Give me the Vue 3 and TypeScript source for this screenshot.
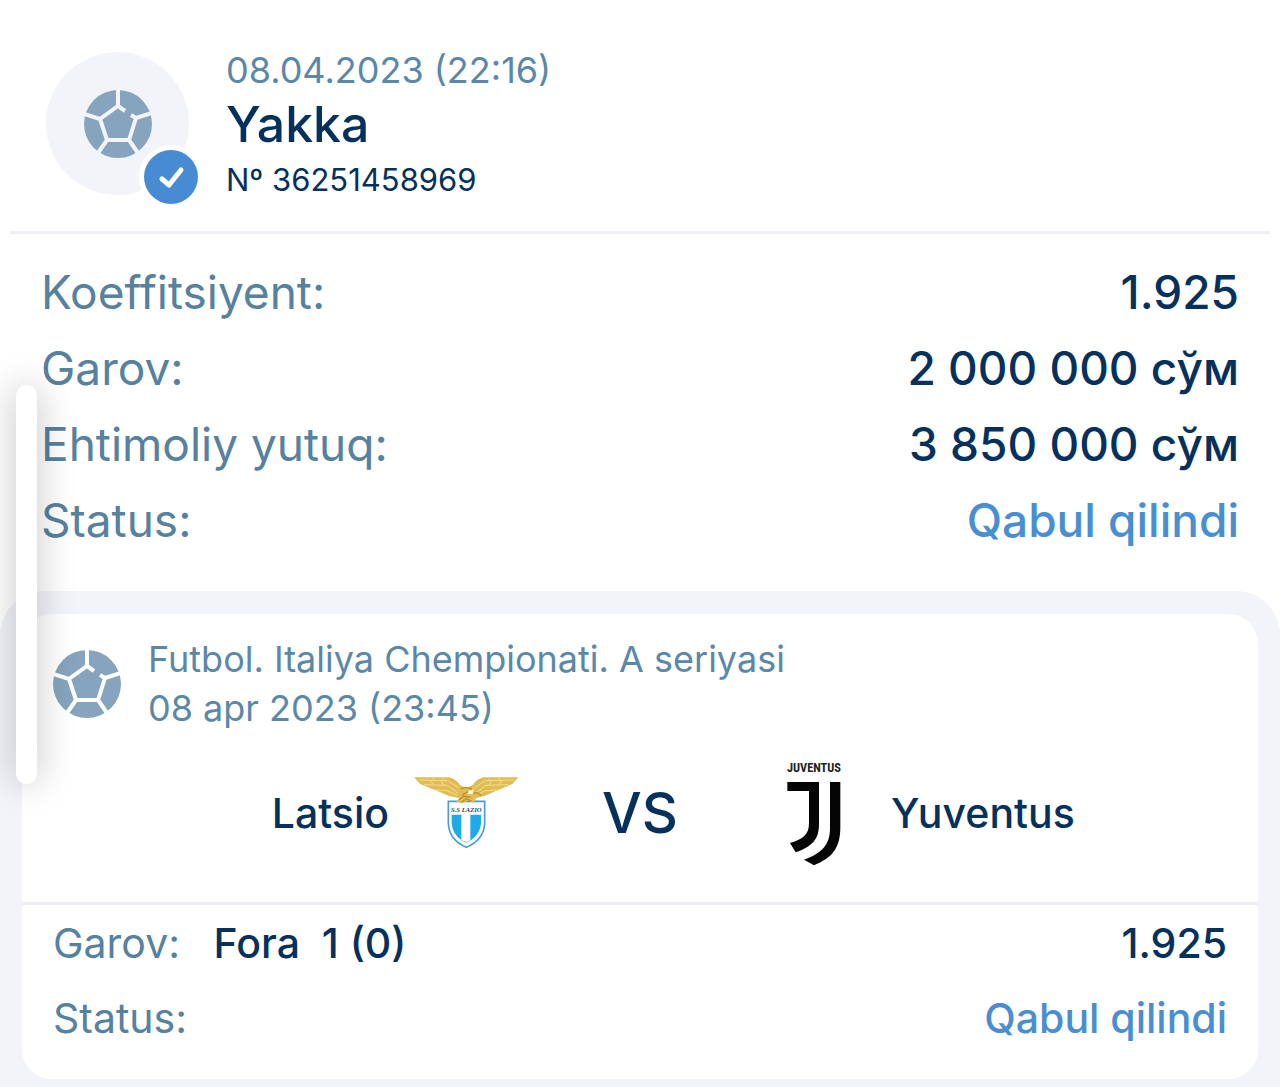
<script setup lang="ts">
interface Row {
  label: string
  value: string
  accent?: boolean
}

const coupon = {
  date: '08.04.2023 (22:16)',
  type: 'Yakka',
  number: 'Nº 36251458969',
}

const summary: Row[] = [
  { label: 'Koeffitsiyent:', value: '1.925' },
  { label: 'Garov:', value: '2 000 000 сўм' },
  { label: 'Ehtimoliy yutuq:', value: '3 850 000 сўм' },
  { label: 'Status:', value: 'Qabul qilindi', accent: true },
]

const match = {
  league: 'Futbol. Italiya Chempionati. A seriyasi',
  date: '08 apr 2023 (23:45)',
  home: 'Latsio',
  away: 'Yuventus',
}
</script>

<template>
  <main class="page">
    <header class="head">
      <div class="avatar">
        <svg class="ball" viewBox="0 0 68 68" aria-hidden="true">
          <circle cx="34" cy="34" r="34" fill="#86a4bd" />
          <path
            d="M34 0V17M41 21L34 16L16 29L23 50H45L52 28L47 25M52 28L68 23M16 29L0 24M23 50L14 63M45 50L54 63"
            fill="none" stroke="#f3f4fa" stroke-width="4"
          />
        </svg>
        <svg class="badge" viewBox="0 0 64 64" aria-hidden="true">
          <circle cx="32" cy="32" r="32" fill="#fff" />
          <circle cx="32" cy="32" r="27" fill="#478cd3" />
          <path d="M23 34L30 40L42 25" fill="none" stroke="#fff" stroke-width="5" stroke-linecap="round" stroke-linejoin="round" />
        </svg>
      </div>
      <div class="info">
        <time class="date">{{ coupon.date }}</time>
        <h1 class="type">{{ coupon.type }}</h1>
        <p class="number">{{ coupon.number }}</p>
      </div>
    </header>

    <dl class="summary">
      <div v-for="row in summary" :key="row.label" class="row">
        <dt>{{ row.label }}</dt>
        <dd :class="{ accent: row.accent }">{{ row.value }}</dd>
      </div>
    </dl>

    <section class="events">
      <article class="card">
        <div class="league">
          <svg class="ball" viewBox="0 0 68 68" aria-hidden="true">
            <circle cx="34" cy="34" r="34" fill="#86a4bd" />
            <path
              d="M34 0V17M41 21L34 16L16 29L23 50H45L52 28L47 25M52 28L68 23M16 29L0 24M23 50L14 63M45 50L54 63"
              fill="none" stroke="#fff" stroke-width="4"
            />
          </svg>
          <p>{{ match.league }}<br /><time>{{ match.date }}</time></p>
        </div>

        <div class="teams">
          <div class="team home">
            <span>{{ match.home }}</span>
            <svg class="logo" viewBox="45 3 312 312" aria-hidden="true">
              <path d="M148 124H257V190Q255 240 202 262Q150 240 148 190Z" fill="#fff" stroke="#4a9bd0" stroke-width="5" />
              <path d="M158 164H187V240Q160 222 158 190ZM214 164H246V190Q244 222 214 242Z" fill="#20a9ea" />
              <path d="M187 240Q202 252 214 242" fill="none" stroke="#8cc9e8" stroke-width="3" />
              <text x="202" y="157" text-anchor="middle" class="crest">S.S LAZIO</text>
              <path
                d="M45 52L150 52Q170 56 184 76L200 84L220 76Q234 56 254 52L358 52L340 72L312 84L284 96L256 108L232 114L222 128L208 122L190 130L172 126L180 114L150 108L122 96L92 84L64 72Z"
                fill="#e0bc52"
              />
              <path
                d="M60 60L146 62L180 84M76 74L144 76L176 98M108 90L144 92L174 106M344 60L258 62L226 84M328 74L260 76L232 98M296 90L260 92L236 104M100 52L108 62M130 52L138 62M304 52L296 62M274 52L266 62M96 62L104 74M308 62L300 74M126 62L134 76M278 62L270 76"
                fill="none" stroke="#f4dd94" stroke-width="3"
              />
              <path
                d="M186 86L200 82L216 86L220 98L206 96L190 104M216 100L234 98L246 106M180 120L194 108L214 112M188 126L202 116L218 124"
                fill="none" stroke="#b98f32" stroke-width="4"
              />
              <path d="M208 92L224 88L222 102L206 103Z" fill="#fff3c4" />
            </svg>
          </div>
          <strong class="versus">VS</strong>
          <div class="team away">
            <svg class="logo" viewBox="-24 33 312 312" aria-hidden="true">
              <text x="132" y="66" text-anchor="middle" class="wordmark">JUVENTUS</text>
              <path
                d="M52 96H147V222C147 270 125 290 77 307L60 279C100 266 117 254 117 218V123H52Z"
                fill="#050505"
              />
              <path d="M180 96H211V232C211 296 185 324 132 346L102 329C154 311 180 286 180 235Z" fill="#050505" />
            </svg>
            <span>{{ match.away }}</span>
          </div>
        </div>

        <dl class="bet">
          <div class="row">
            <dt>Garov: <b>Fora&nbsp; 1 (0)</b></dt>
            <dd>1.925</dd>
          </div>
          <div class="row">
            <dt>Status:</dt>
            <dd class="accent">Qabul qilindi</dd>
          </div>
        </dl>
      </article>
    </section>

    <div class="handle" aria-hidden="true"></div>
  </main>
</template>

<style>
body {
  margin: 0;
  background: #fff;
}
</style>

<style scoped>
.page {
  position: relative;
  display: flex;
  flex-direction: column;
  min-height: 100vh;
  overflow: hidden;
  font-family: Inter, 'Liberation Sans', sans-serif;
  color: #05315c;
}

h1,
p,
dl,
dd {
  margin: 0;
}

.head {
  display: flex;
  gap: 37px;
  margin: 0 10px;
  padding: 46px 36px 25px;
  border-bottom: 3px solid #eff0f3;
}

.avatar {
  position: relative;
  display: flex;
  align-items: center;
  justify-content: center;
  width: 143px;
  height: 143px;
  margin-top: 6px;
  border-radius: 50%;
  background: #f3f4fa;
}

.ball {
  flex: none;
  width: 68px;
  height: 68px;
}

.badge {
  position: absolute;
  right: -14px;
  bottom: -14px;
  width: 64px;
  height: 64px;
}

.info {
  display: flex;
  flex-direction: column;
}

.date {
  font-size: 36px;
  line-height: 48px;
  color: #5c88a8;
}

.type {
  font-size: 50px;
  font-weight: 500;
  line-height: 60px;
}

.number {
  font-size: 31px;
  line-height: 52px;
}

.summary {
  padding: 20px 41px 33px;
  font-size: 46px;
}

.row {
  display: flex;
  align-items: center;
  justify-content: space-between;
  height: 76px;
}

dt {
  color: #56819f;
}

dd,
b {
  font-weight: 500;
  color: #05315c;
}

.accent {
  color: #4a8ed2;
}

.events {
  flex: 1;
  padding: 23px 22px 8px;
  border-radius: 44px 44px 0 0;
  background: #f3f4fa;
}

.card {
  border-radius: 30px;
  background: #fff;
}

.league {
  display: flex;
  align-items: center;
  gap: 27px;
  padding: 21px 31px 0;
  font-size: 36px;
  line-height: 49px;
  color: #5c88a8;
}

.teams {
  display: grid;
  grid-template-columns: 1fr auto 1fr;
  align-items: center;
  gap: 84px;
  padding: 28px 0 37px;
  border-bottom: 3px solid #ecedf5;
  font-size: 41px;
  font-weight: 500;
}

.team {
  display: flex;
  align-items: center;
  gap: 25px;
}

.home {
  justify-content: flex-end;
}

.logo {
  width: 104px;
  height: 104px;
  overflow: visible;
}

.crest {
  font: italic 700 20px 'Liberation Serif', serif;
  fill: #26466e;
}

.wordmark {
  font: 700 37px 'Liberation Sans Narrow', 'Roboto Condensed', Roboto, sans-serif;
  fill: #222;
}

.versus {
  font-size: 56px;
  font-weight: 500;
}

.bet {
  padding: 0 31px 24px;
  font-size: 41px;
}

.bet .row {
  height: 75px;
}

b {
  margin-left: 22px;
}

.handle {
  position: absolute;
  top: 385px;
  left: 16px;
  width: 21px;
  height: 399px;
  border-radius: 11px;
  background: #fff;
  box-shadow: 0 0 36px rgba(0, 0, 0, 0.28);
}
</style>
